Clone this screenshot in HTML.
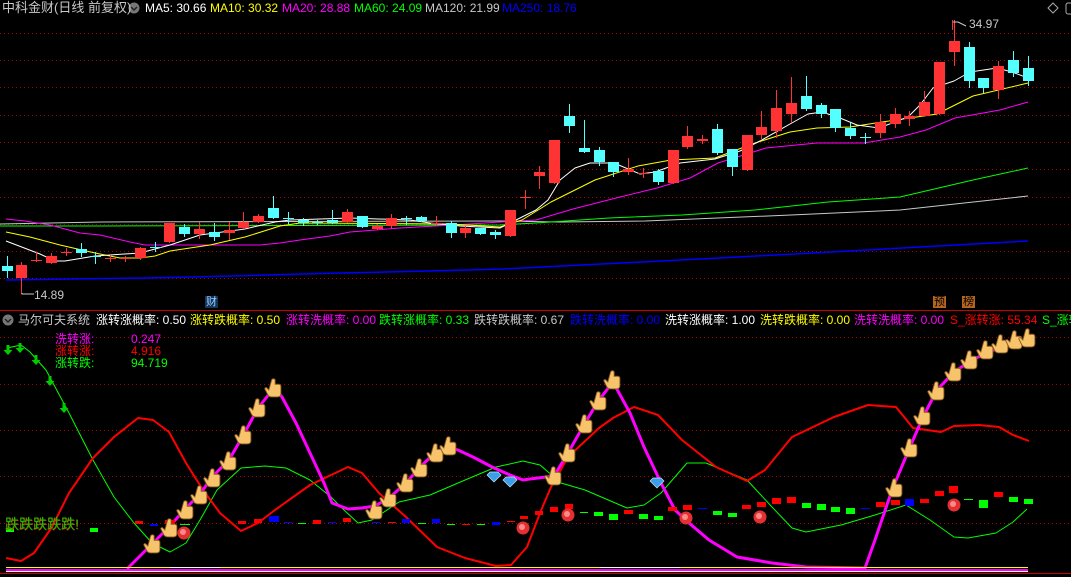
<!DOCTYPE html>
<html><head><meta charset="utf-8">
<style>
html,body{margin:0;padding:0;background:#000;}
#wrap{position:relative;width:1071px;height:577px;overflow:hidden;background:#000;font-family:"Liberation Sans","Noto Sans CJK SC",sans-serif;font-size:12px;}
.t{position:absolute;white-space:nowrap;line-height:14px;}
svg{position:absolute;left:0;top:0;}
</style></head><body>
<div id="wrap">
<svg id="s" width="1071" height="577" viewBox="0 0 1071 577"></svg>

<div class="t" style="left:2px;top:1px;color:#c8c8c8;font-size:13px">中科金财(日线 前复权)</div>
<div class="t" style="left:145px;top:1px;color:#fff">MA5: 30.66</div>
<div class="t" style="left:210px;top:1px;color:#ff0">MA10: 30.32</div>
<div class="t" style="left:282px;top:1px;color:#f0f">MA20: 28.88</div>
<div class="t" style="left:354px;top:1px;color:#0f0">MA60: 24.09</div>
<div class="t" style="left:425px;top:1px;color:#c8c8c8">MA120: 21.99</div>
<div class="t" style="left:502px;top:1px;color:#0000ff">MA250: 18.76</div>

<div class="t" style="left:969px;top:17px;color:#c8c8c8">34.97</div>
<div class="t" style="left:34px;top:288px;color:#c8c8c8">14.89</div>
<div class="t" style="left:205px;top:296px;color:#9cf;background:#13355a;font-size:11px;line-height:12px;padding:0 1px">财</div>
<div class="t" style="left:933px;top:296px;color:#000;background:#b5651d;font-size:11px;line-height:12px;padding:0 1px">预</div>
<div class="t" style="left:962px;top:296px;color:#000;background:#b5651d;font-size:11px;line-height:12px;padding:0 1px">榜</div>

<div class="t" style="left:18px;top:313px;color:#c8c8c8;font-size:12px">马尔可夫系统</div>
<div class="t" style="left:96px;top:313px;color:#fff">涨转涨概率: 0.50</div>
<div class="t" style="left:190px;top:313px;color:#ff0">涨转跌概率: 0.50</div>
<div class="t" style="left:286px;top:313px;color:#f0f">涨转洗概率: 0.00</div>
<div class="t" style="left:379px;top:313px;color:#0f0">跌转涨概率: 0.33</div>
<div class="t" style="left:474px;top:313px;color:#c8c8c8">跌转跌概率: 0.67</div>
<div class="t" style="left:570px;top:313px;color:#0000ff">跌转洗概率: 0.00</div>
<div class="t" style="left:665px;top:313px;color:#fff">洗转涨概率: 1.00</div>
<div class="t" style="left:760px;top:313px;color:#ff0">洗转跌概率: 0.00</div>
<div class="t" style="left:854px;top:313px;color:#f0f">洗转洗概率: 0.00</div>
<div class="t" style="left:950px;top:313px;color:#f00">S_涨转涨: 55.34</div>
<div class="t" style="left:1042px;top:313px;color:#0f0">S_涨转</div>

<div class="t" style="left:55px;top:332px;color:#f0f">洗转涨:</div>
<div class="t" style="left:131px;top:332px;color:#f0f">0.247</div>
<div class="t" style="left:55px;top:344px;color:#f00">涨转涨:</div>
<div class="t" style="left:131px;top:344px;color:#f00">4.916</div>
<div class="t" style="left:55px;top:356px;color:#0f0">涨转跌:</div>
<div class="t" style="left:131px;top:356px;color:#0f0">94.719</div>
<div class="t" style="left:5px;top:517px;color:#0c0;font-size:14px;text-shadow:0.5px 0.5px 0 #f00">跌跌跌跌跌!</div>
</div>
<script>
var s=document.getElementById('s'),h='';
function L(pts,c,w){h+='<polyline fill="none" stroke="'+c+'" stroke-width="'+(w||1)+'" stroke-linejoin="round" points="'+pts.map(function(p){return p.join(',')}).join(' ')+'"/>';}
function R(x,y,w,hh,c){h+='<rect x="'+x+'" y="'+y+'" width="'+w+'" height="'+hh+'" fill="'+c+'"/>';}
[33,60,87,115,142,169,197,224,251,278].forEach(function(y){h+='<line x1="0" x2="1071" y1="'+y+'.5" y2="'+y+'.5" stroke="#a00" stroke-dasharray="1,3"/>';});
[337,384,430,476,523].forEach(function(y){h+='<line x1="0" x2="1071" y1="'+y+'.5" y2="'+y+'.5" stroke="#a00" stroke-dasharray="1,3"/>';});
R(0,310,1071,1,'#c00');R(0,573,1071,1,'#c00');
L([[0,224],[100,222],[500,221],[560,222],[645,221],[718,218],[791,215],[900,210],[1028,196]],'#c8c8c8');
L([[0,226],[100,226],[500,225],[536,223],[609,218],[682,215],[755,210],[828,202],[900,197],[973,180],[1028,168]],'#0f0');
L([[6,280],[73,279],[147,278],[193,277],[267,275],[341,273],[429,271],[504,269],[700,259],[850,251],[1028,241]],'#0000ff',1.5);
L([[6,219],[25,221],[50,225],[80,233],[100,235],[130,242],[145,245],[260,245],[280,243],[300,240],[330,236],[350,232],[400,228],[470,224],[500,222],[536,220],[573,209],[620,197],[657,188],[690,178],[718,163],[766,148],[817,143],[864,143],[900,137],[926,130],[955,118],[1000,110],[1028,102]],'#f0f');
L([[6,232],[30,237],[60,245],[95,253],[120,258],[140,258],[155,256],[170,251],[210,245],[245,237],[280,226],[300,223],[450,224],[500,227],[522,220],[551,202],[595,180],[638,166],[671,160],[715,158],[755,143],[790,132],[817,128],[850,127],[882,122],[937,114],[973,96],[1028,83]],'#ff0');
L([[6,241],[40,254],[55,261],[65,261],[95,256],[140,253],[170,245],[200,235],[245,229],[275,222],[290,220],[350,218],[410,220],[430,223],[460,226],[500,228],[512,222],[536,210],[548,200],[560,180],[575,168],[590,163],[614,163],[640,174],[655,172],[680,163],[715,159],[740,151],[760,141],[790,124],[808,114],[822,112],[840,118],[857,125],[879,128],[908,117],[920,105],[933,88],[954,81],[970,72],[997,68],[1012,72],[1028,78]],'#fff');
var C=[['c',266,271,256,277],['r',265,278,262,293],['r',260,261,252,261],['r',256,263,253,263],['r',252,253,248,255],['c',249,253,243,256],['c',256,257,252,263],['r',258,259,255,261],['r',258,259,256,261],['r',248,258,247,259],['c',247,248,242,251],['r',223,242,223,242],['c',227,234,224,236],['r',229,234,222,238],['c',232,237,223,240],['r',230,233,222,239],['r',222,228,212,228],['r',216,222,214,222],['c',208,218,196,218],['c',218,219,212,223],['c',220,223,218,225],['c',222,223,220,224],['c',220,223,210,223],['r',212,222,209,222],['c',216,227,216,227],['r',226,229,224,229],['r',218,226,214,228],['c',218,219,216,224],['c',217,221,216,221],['r',223,224,216,224],['c',223,233,221,237],['r',228,233,226,237],['c',228,234,228,234],['c',232,235,230,238],['r',210,236,210,236],['r',197,198,190,208],['r',172,176,166,188],['r',140,183,140,183],['c',116,126,104,132],['c',148,152,120,152],['c',150,162,147,165],['c',162,172,162,176],['r',169,172,158,174],['r',173,174,168,177],['c',171,182,169,184],['r',150,183,150,183],['r',136,147,126,148],['r',139,141,135,143],['c',129,153,124,154],['c',149,167,149,175],['r',135,170,135,170],['r',127,135,111,138],['r',108,131,90,137],['r',103,114,77,122],['c',96,109,76,110],['c',105,114,103,117],['c',109,128,109,131],['c',128,136,123,138],['c',137,138,133,143],['r',122,133,114,137],['r',114,124,108,127],['r',116,119,111,125],['r',102,116,91,116],['r',62,114,62,114],['r',41,52,20,65],['c',47,81,42,87],['c',78,88,78,92],['r',66,90,61,98],['c',60,73,51,76],['c',68,81,56,85]];
C.forEach(function(k,i){var x=Math.round(6.6+14.8*i),col=k[0]=='r'?'#ff3333':'#54ffff';
 R(x,k[3],1,k[4]-k[3]+1,col);
 var bh=k[2]-k[1];R(x-5,k[1],11,bh<1?1:bh,col);});
L([[22,293],[22,294],[34,294]],'#c8c8c8');L([[952,22],[958,22],[966,26]],'#c8c8c8');R(952,20,1,10,'#ff3333');
h+='<path d="M1053 3 L1058 8 L1053 13 L1048 8Z" fill="none" stroke="#aaa"/><rect x="1066" y="3" width="8" height="11" rx="2" fill="none" stroke="#aaa"/>';
h+='<circle cx="134" cy="8" r="5.5" fill="#777"/><path d="M131 7 L134 10 L137 7" stroke="#222" stroke-width="1.5" fill="none"/>';
h+='<circle cx="8" cy="320" r="5.5" fill="#777"/><path d="M5 319 L8 322 L11 319" stroke="#222" stroke-width="1.5" fill="none"/>';
L([[7,348],[21,345],[30,352],[46,370],[69,413],[93,460],[114,497],[134,523],[152,543],[170,552],[186,543],[200,520],[217,490],[241,468],[265,466],[286,468],[310,480],[331,497],[344,510],[358,523],[372,520],[399,502],[430,495],[458,483],[496,467],[523,461],[540,465],[561,483],[585,490],[627,508],[644,505],[661,493],[687,463],[706,463],[747,480],[772,507],[792,528],[806,532],[841,525],[875,515],[906,505],[930,520],[954,537],[968,538],[996,533],[1013,522],[1027,509]],'#0f0');
L([[6,558],[21,561],[34,553],[52,527],[69,493],[93,458],[114,437],[138,418],[153,420],[169,432],[186,463],[203,490],[220,513],[241,531],[258,523],[275,510],[310,485],[348,467],[362,473],[379,493],[406,517],[437,547],[465,558],[496,566],[511,565],[527,547],[540,513],[551,487],[568,457],[599,428],[613,418],[634,407],[658,415],[682,440],[716,467],[747,481],[765,470],[792,437],[834,417],[868,405],[896,407],[913,428],[941,432],[954,426],[979,425],[999,427],[1013,435],[1029,441]],'#f00',2);
L([[127,569],[153,543],[169,527],[186,508],[200,494],[213,476],[229,460],[244,434],[258,408],[274,388],[282,397],[296,423],[310,453],[324,483],[332,503],[348,509],[362,508],[375,506],[389,498],[406,483],[420,467],[436,452],[448,447],[458,450],[475,458],[492,467],[510,475],[523,480],[530,479],[554,476],[568,453],[585,423],[599,400],[613,382],[630,413],[644,447],[661,483],[675,510],[689,523],[709,540],[737,557],[772,563],[806,567],[865,568],[875,540],[892,490],[910,447],[923,417],[937,390],[954,372],[972,360],[989,352],[1006,345],[1027,340]],'#f0f',3);
R(6,567,1022,1,'#ff0');R(6,569,1022,2,'#f0f');R(6,571,1022,1,'#fff');R(170,567,50,1,'#fff');R(600,567,80,1,'#fff');
var D=[[6,528,8,4,'#0f0'],[90,528,8,4,'#0f0'],[135,521,8,3,'#f00'],[150,524,8,2,'#00f'],[165,520,10,4,'#f00'],[180,524,10,1,'#0f0'],[238,521,8,3,'#f00'],[254,519,8,4,'#f00'],[269,516,10,6,'#00f'],[284,522,8,1,'#00f'],[298,523,8,1,'#0f0'],[313,520,8,4,'#f00'],[328,522,8,1,'#00f'],[343,518,8,4,'#f00'],[372,522,8,1,'#00f'],[388,522,8,1,'#f00'],[402,519,8,4,'#00f'],[418,523,8,1,'#0f0'],[432,519,8,4,'#00f'],[447,524,8,1,'#0f0'],[462,524,8,1,'#f00'],[477,524,8,1,'#0f0'],[492,522,8,3,'#00f'],[507,521,8,1,'#f00'],[520,516,8,3,'#f00'],[535,511,8,4,'#f00'],[550,507,8,5,'#f00'],[565,504,8,5,'#f00'],[580,512,8,1,'#0f0'],[594,512,9,4,'#0f0'],[609,514,9,6,'#0f0'],[624,510,9,4,'#f00'],[639,514,9,5,'#0f0'],[654,516,9,4,'#0f0'],[668,507,9,4,'#f00'],[683,505,9,5,'#f00'],[698,508,9,1,'#00f'],[713,511,9,4,'#0f0'],[728,513,9,4,'#0f0'],[742,505,9,4,'#f00'],[757,502,9,5,'#f00'],[772,498,9,6,'#f00'],[787,497,9,6,'#f00'],[802,503,9,5,'#0f0'],[817,504,9,6,'#0f0'],[831,507,9,5,'#0f0'],[846,508,9,6,'#0f0'],[861,508,9,1,'#00f'],[876,502,9,5,'#f00'],[891,500,9,5,'#f00'],[905,499,9,7,'#00f'],[920,499,9,4,'#f00'],[935,491,9,5,'#f00'],[949,486,9,7,'#f00'],[964,499,9,1,'#0f0'],[979,500,9,8,'#0f0'],[994,492,9,5,'#f00'],[1009,497,9,5,'#0f0'],[1024,499,9,5,'#0f0']];
D.forEach(function(d){R(d[0],d[1],d[2],d[3],d[4]);});
[[8,352],[20,350],[36,362],[50,383],[64,410]].forEach(function(p){var x=p[0],y=p[1];h+='<path d="M'+(x-1.5)+' '+(y-7)+' h3 v5 h3 l-4.5 5 l-4.5 -5 h3z" fill="#0c0"/>';});
[[153,546],[170,530],[186,512],[200,497],[213,480],[229,463],[244,437],[258,410],[274,390],[375,512],[389,500],[406,485],[420,470],[436,455],[449,448],[554,478],[568,455],[585,426],[599,403],[613,382],[895,490],[910,450],[923,418],[937,393],[954,374],[970,362],[986,352],[1001,346],[1015,342],[1028,340]].forEach(function(p){var x=p[0],y=p[1];
 h+='<path transform="translate('+x+' '+y+') scale(1.15) translate('+(-x)+' '+(-y)+')" d="M'+(x-2)+' '+(y-9)+' q1.5 -1.5 3 0 v4 h3 q2 0 2 2 v6 q0 3 -3 3 h-5 q-3 0 -4 -3 l-2 -4 q0 -1.5 1.5 -1 l2 2z" fill="#f7c46c" stroke="#8a5a20" stroke-width="0.8"/>';});
[[184,533],[523,528],[568,515],[686,518],[760,517],[954,505]].forEach(function(p){h+='<circle cx="'+p[0]+'" cy="'+p[1]+'" r="6.5" fill="#e43030"/><circle cx="'+(p[0]-1)+'" cy="'+(p[1]-1)+'" r="3" fill="#ffb0b0" opacity=".7"/>';});
[[494,478],[510,483],[657,484]].forEach(function(p){var x=p[0],y=p[1];h+='<path d="M'+(x-7)+' '+(y-3)+' l3 -3 h8 l3 3 l-7 7z" fill="#3d9ee8" stroke="#bfe3ff" stroke-width="0.7"/>';});
s.innerHTML=h;
</script>
</body></html>
